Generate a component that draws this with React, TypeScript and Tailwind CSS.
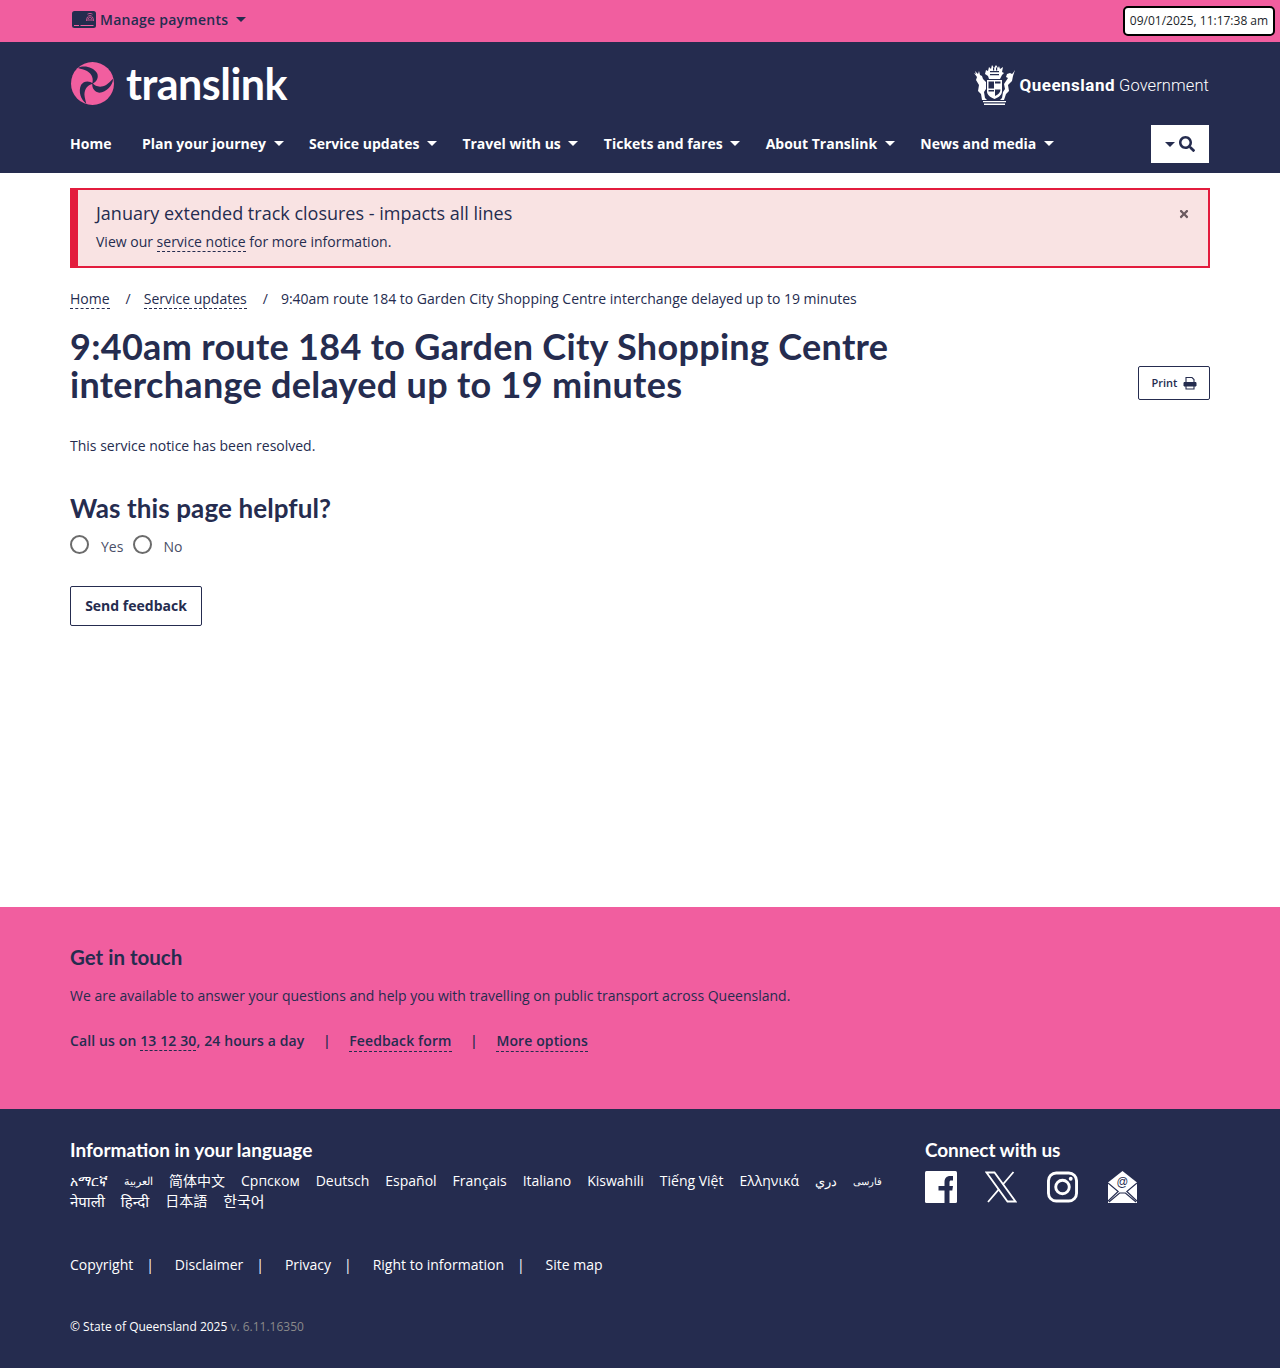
import React from "react";
import { FaSearch, FaTimes } from "react-icons/fa";

const body = "font-['Open_Sans','Noto_Sans','Noto_Sans_CJK_SC',sans-serif]";
const heading = "font-['Lato','Open_Sans',sans-serif]";
const dashed = "border-b border-dashed border-[#252c4f]";

const navItems = [
  { label: "Home", caret: false },
  { label: "Plan your journey", caret: true },
  { label: "Service updates", caret: true },
  { label: "Travel with us", caret: true },
  { label: "Tickets and fares", caret: true },
  { label: "About Translink", caret: true },
  { label: "News and media", caret: true },
];

const languages = [
  { label: "አማርኛ", size: "" },
  { label: "العربية", size: "text-[11px]" },
  { label: "简体中文", size: "" },
  { label: "Српском", size: "" },
  { label: "Deutsch", size: "" },
  { label: "Español", size: "" },
  { label: "Français", size: "" },
  { label: "Italiano", size: "" },
  { label: "Kiswahili", size: "" },
  { label: "Tiếng Việt", size: "" },
  { label: "Ελληνικά", size: "" },
  { label: "دري", size: "text-[13px]" },
  { label: "فارسی", size: "text-[10px]" },
  { label: "नेपाली", size: "text-[15px]" },
  { label: "हिन्दी", size: "text-[15px]" },
  { label: "日本語", size: "" },
  { label: "한국어", size: "text-[15px]" },
];

const footerLinks = ["Copyright", "Disclaimer", "Privacy", "Right to information", "Site map"];

function Caret({ light }: { light?: boolean }) {
  return (
    <span
      className={`inline-block w-0 h-0 border-x-[5px] border-t-[5px] border-x-transparent ${
        light ? "border-t-white" : "border-t-[#252c4f]"
      }`}
    />
  );
}

function CardIcon() {
  return (
    <svg width="24" height="17" viewBox="0 0 24 17">
      <rect width="24" height="17" rx="2.5" fill="#252c4f" />
      <path d="M2 14.5h5M8.5 14.5h13" stroke="#f15e9f" strokeWidth="1" />
      <path
        d="M14.500 10c0-3.500 1.700-5.500 3.500-5.500s3.500 2 3.500 5.500M16 10c0-2.400.8-4 2-4s2 1.600 2 4M18 10V7.800M15.500 3.200c1.500-1 3.500-1 5 0"
        stroke="#f15e9f"
        strokeWidth="0.8"
        fill="none"
      />
    </svg>
  );
}

function TranslinkMark() {
  const gap = "M7 6C13 3 22 5 26 11C28 15 26 20 21 22C23 17 21 12 16 9C13 7.500 10 7 7 6Z";
  return (
    <svg width="43" height="43" viewBox="0 0 43 43">
      <circle cx="21.5" cy="21.5" r="21.5" fill="#f15e9f" />
      <path d={gap} fill="#252c4f" />
      <path d={gap} fill="#252c4f" transform="rotate(120 21.5 21.5)" />
      <path d={gap} fill="#252c4f" transform="rotate(240 21.5 21.5)" />
    </svg>
  );
}

function CoatOfArms() {
  return (
    <svg width="43" height="42" viewBox="0 0 43 42" fill="#fff">
      {/* stag */}
      <path d="M1 9l2 1-1-3 3 3 1-3 1 4 2 1 1 3 3 3v7l-2 3 1 6 2 2H9l-1-6-3-3 1-6-3-5 1-3z" />
      {/* brolga side */}
      <path d="M42 6l-2 3-1 1-2-1-3 1-1 3 2 1-2 3-2 3 1 5-2 3-1 6-2 2h4l2-6 3-3-1-6 4-4 1-5z" />
      {/* shield */}
      <path d="M14 16h15v11c0 4-3 6-7.500 8C17 33 14 31 14 27z" />
      <path d="M15.500 17.500h5.500v7h-5.500zM22 25.500h5.500c0 3-2 5-5.500 6.500zM22 17.500h5.500v2h-5.500zM15.500 26h5.500v1.500h-5.500z" fill="#252c4f" />
      {/* crest */}
      <path d="M13 6l2 1 1-4 2 2 1-4 2 3 2-3 2 3 1-2 1 3 3-2-1 5 2 1-2 2-2 4H16l-1-3-3-2z" />
      <path d="M17 7h9v1.200h-9zM17 10h9v1.200h-9zM20 3.500h1.200v3H20zM23 3.500h1.200v3H23z" fill="#252c4f" />
      {/* motto */}
      <path d="M10 37h23v1.200H10zM11 39.500h21v1.500H11z" />
    </svg>
  );
}

function PrintIcon() {
  return (
    <svg width="14" height="14" viewBox="0 0 14 14" fill="none" stroke="#252c4f" strokeWidth="1.100">
      <path d="M3 6V1.500h6l2 2V6M3 10v3h8v-3" />
      <path d="M1 6.500h12v3.500H1z" fill="#252c4f" strokeWidth="1" />
    </svg>
  );
}

function FacebookIcon() {
  return (
    <svg width="32" height="32" viewBox="0 0 32 32">
      <rect width="32" height="32" rx="1.500" fill="#fff" />
      <path
        d="M19.500 32V19.500H13.500V15H19.500V11C19.500 7 22 5 25 5H28V9.500H26C25 9.500 24.500 10 24.500 11.500V15H28L27.300 19.500H24.500V32Z"
        fill="#252c4f"
      />
    </svg>
  );
}

function XIcon() {
  return (
    <svg width="32" height="32" viewBox="0 0 32 32" fill="none" stroke="#fff" strokeWidth="1.800">
      <path d="M1.500 1.500h8l21 29h-8z" />
      <path d="M28.500 1L17.800 13.500M14 18.200L3 31" />
    </svg>
  );
}

function InstagramIcon() {
  return (
    <svg width="31" height="32" viewBox="0 0 32 32" fill="none" stroke="#fff">
      <rect x="1.500" y="1.500" width="29" height="29" rx="8" strokeWidth="3" />
      <circle cx="16" cy="16" r="7" strokeWidth="3" />
      <circle cx="24.500" cy="7.500" r="2" fill="#fff" stroke="none" />
    </svg>
  );
}

function MailIcon() {
  return (
    <svg width="29" height="32" viewBox="0 0 30 32" preserveAspectRatio="none">
      <path d="M0 11.500L15 0l15 11.500V32H0z" fill="#fff" />
      <path d="M0 12l10.500 8.500L0 30M30 12l-10.500 8.500L30 30M1 31l11-9h6l11 9" fill="none" stroke="#252c4f" strokeWidth="1.200" />
      <text x="15" y="15" textAnchor="middle" fontSize="12" fill="#252c4f" fontFamily="Liberation Sans, sans-serif">@</text>
    </svg>
  );
}

export default function App() {
  return (
    <div className={`${body} text-[14px] leading-[21px] text-[#252c4f] bg-white min-h-[1368px]`}>
      <div className="h-[42px] bg-[#f15e9f] flex items-center justify-between pl-[72px] pr-[5px]">
        <div className="flex items-center pb-[4px]">
          <CardIcon />
          <span className="ml-1 font-semibold tracking-[0.25px]">Manage payments</span>
          <span className="ml-[8px] flex"><Caret /></span>
        </div>
        <div className="w-[152px] h-[30px] bg-white border-2 border-black rounded-[5px] flex items-center justify-center pb-[2px] text-[12px] text-[#212529]">
          09/01/2025, 11:17:38 am
        </div>
      </div>

      <header className="bg-[#252c4f] h-[131px] px-[70px] text-white">
        <div className="h-[83px] flex items-center justify-between">
          <div className="flex items-center ml-[1px]">
            <TranslinkMark />
            <span className={`${heading} ml-3 text-[43px] font-bold leading-none tracking-[-0.5px]`}>translink</span>
          </div>
          <div className="flex items-center pr-[1px] mt-[3px]">
            <CoatOfArms />
            <span className="ml-[3px] font-['Roboto',sans-serif] text-[17px] tracking-[0.1px]">
              <span className="font-bold mr-1 tracking-[0.5px]">Queensland</span>
              <span className="font-light text-[16.5px]">Government</span>
            </span>
          </div>
        </div>
        <nav className="flex items-center justify-between pr-[1px]">
          <ul className="flex items-center pb-[2px]">
            {navItems.map((item) => (
              <li key={item.label} className={`flex items-center font-bold ${item.caret ? "mr-[25.5px]" : "mr-[30.5px]"}`}>
                {item.label}
                {item.caret && <span className="ml-[7.5px] flex"><Caret light /></span>}
              </li>
            ))}
          </ul>
          <button className="w-[58px] h-[38px] bg-white flex items-center justify-center gap-1 text-[#252c4f]">
            <Caret />
            <FaSearch size={16} />
          </button>
        </nav>
      </header>

      <main className="px-[70px] pt-[15px] h-[734px]">
        <div className="relative h-[80px] bg-[#f9e3e3] border-2 border-l-[8px] border-[#e31c3d] pl-[18px] pt-[11px]">
          <p className="text-[18px] leading-[24px]">January extended track closures - impacts all lines</p>
          <p className="mt-[6px]">
            View our <a className={dashed}>service notice</a> for more information.
          </p>
          <FaTimes size={12} className="absolute right-[18px] top-[18px] text-[#6b5a5f]" />
        </div>

        <div className="flex items-center mt-[20px]">
          <a className={`${dashed} leading-[19px]`}>Home</a>
          <span className="ml-[16px] mr-[13px]">/</span>
          <a className={`${dashed} leading-[19px]`}>Service updates</a>
          <span className="ml-[16px] mr-[13px]">/</span>
          <span>9:40am route 184 to Garden City Shopping Centre interchange delayed up to 19 minutes</span>
        </div>

        <div className="flex items-end justify-between mt-[18px]">
          <h1 className={`${heading} text-[36px] leading-[38px] font-bold tracking-[0.3px] w-[860px]`}>
            9:40am route 184 to Garden City Shopping Centre interchange delayed up to 19 minutes
          </h1>
          <button className="w-[72px] h-[34px] mb-[3px] border border-[#252c4f] rounded-[2px] flex items-center justify-center gap-[6px] pb-[1px] pl-[1px] text-[11px] font-semibold">
            Print <PrintIcon />
          </button>
        </div>

        <p className="mt-[32px]">This service notice has been resolved.</p>

        <h2 className={`${heading} text-[26px] leading-[30px] font-bold tracking-[0.1px] mt-[37px]`}>Was this page helpful?</h2>
        <div className="flex items-center mt-[9px]">
          <span className="w-[19px] h-[19px] rounded-full border-2 border-[#6b6b6b]" />
          <span className="ml-[12px] mt-1 text-[#4a4f68]">Yes</span>
          <span className="ml-[10px] w-[19px] h-[19px] rounded-full border-2 border-[#6b6b6b]" />
          <span className="ml-[11px] mt-1 text-[#4a4f68]">No</span>
        </div>
        <button className="mt-[29px] w-[132px] h-[40px] pb-[2px] border border-[#252c4f] rounded-[2px] font-bold">Send feedback</button>
      </main>

      <section className="h-[202px] bg-[#f15e9f] px-[70px] pt-[37px]">
        <h2 className={`${heading} text-[20.5px] leading-[26px] font-bold`}>Get in touch</h2>
        <p className="mt-[15px]">We are available to answer your questions and help you with travelling on public transport across Queensland.</p>
        <div className="flex items-start mt-[24px] font-semibold tracking-[0.12px]">
          <span>Call us on <a className={dashed}>13 12 30</a>, 24 hours a day</span>
          <span className="mx-[18.5px]">|</span>
          <a className={dashed}>Feedback form</a>
          <span className="mx-[18.5px]">|</span>
          <a className={dashed}>More options</a>
        </div>
      </section>

      <footer className="h-[259px] bg-[#252c4f] px-[70px] pt-[29px] text-white">
        <div className="flex">
          <div className="w-[855px]">
            <h2 className={`${heading} text-[19px] leading-[24px] font-bold`}>Information in your language</h2>
            <ul className="flex flex-wrap items-center gap-x-4 mt-[9px] leading-[20px]">
              {languages.map((l) => (
                <li key={l.label} className={l.size}>{l.label}</li>
              ))}
            </ul>
          </div>
          <div>
            <h2 className={`${heading} text-[19px] leading-[24px] font-bold tracking-[-0.1px]`}>Connect with us</h2>
            <div className="flex items-center mt-[9px]">
              <FacebookIcon />
              <span className="ml-[28px] flex"><XIcon /></span>
              <span className="ml-[30px] flex"><InstagramIcon /></span>
              <span className="ml-[30px] flex"><MailIcon /></span>
            </div>
          </div>
        </div>

        <ul className="flex items-center mt-[43px]">
          {footerLinks.map((l, i) => (
            <li key={l} className="flex items-center">
              {l}
              {i < footerLinks.length - 1 && <span className="ml-[13px] mr-[20.9px]">|</span>}
            </li>
          ))}
        </ul>

        <p className="mt-[41px] text-[12px]">
          © State of Queensland 2025 <span className="text-[#8a8a8a]">v. 6.11.16350</span>
        </p>
      </footer>
    </div>
  );
}
